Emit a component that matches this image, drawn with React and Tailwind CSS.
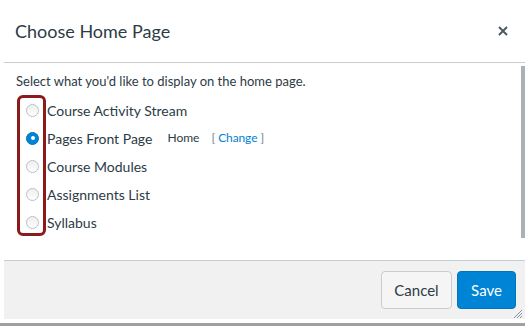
import React from "react";

const options = [
  { label: "Course Activity Stream" },
  { label: "Pages Front Page", checked: true },
  { label: "Course Modules" },
  { label: "Assignments List" },
  { label: "Syllabus" },
];

function Radio({ checked }) {
  if (checked) {
    return (
      <span className="w-[13px] h-[13px] rounded-full bg-[#0084d6] border border-[#0374b5] flex items-center justify-center shrink-0">
        <span className="w-[4px] h-[4px] rounded-full bg-white" />
      </span>
    );
  }
  return (
    <span className="w-[13px] h-[13px] rounded-full bg-gradient-to-b from-[#eeeeee] to-white border border-[#b9c0c5] shrink-0" />
  );
}

export default function App() {
  return (
    <div className="w-[525px] h-[326px] bg-white relative overflow-hidden font-['Lato',sans-serif] text-[#2d3b45]">
      <div className="pl-1">
        <div className="h-[63px] border-b border-[#c7cdd1] flex items-center justify-between pl-[11px] pr-[17px]">
          <h1 className="text-[18px] leading-none">Choose Home Page</h1>
          <svg width="10" height="10" viewBox="0 0 10 10" className="text-[#4d5a63]">
            <path d="M1 1L9 9M9 1L1 9" stroke="currentColor" strokeWidth="2" />
          </svg>
        </div>
      </div>

      <div className="h-[197px] flex">
        <div className="flex-1 pl-4 pt-[8px]">
          <p className="text-[13px] leading-[20px]">
            Select what you'd like to display on the home page.
          </p>
          <div className="mt-[5px]">
            {options.map((o) => (
              <div key={o.label} className="h-[28px] flex items-center pl-[10px] gap-2">
                <Radio checked={o.checked} />
                <span className="text-[14px]">{o.label}</span>
                {o.checked && (
                  <span className="flex items-center text-[12px] ml-[7px]">
                    <span>Home</span>
                    <span className="ml-[12px] text-[#73818c]">[</span>
                    <span className="ml-[3px] text-[#0081d3] tracking-[-0.1px]">Change</span>
                    <span className="ml-[3px] text-[#73818c]">]</span>
                  </span>
                )}
              </div>
            ))}
          </div>
        </div>
        <div className="w-[4px] h-[172px] mt-[3px] bg-[#a9b0b6]" />
      </div>

      <div className="pl-1">
        <div className="h-[59px] border-t border-[#c7cdd1] bg-[#f1f1f1] flex items-center justify-end gap-[5px] pr-[9px] relative">
          <button className="w-[71px] h-[38px] rounded-[4px] border border-[#c7cdd1] bg-[#f5f5f5] text-[15px] text-[#2d3b45]">
            Cancel
          </button>
          <button className="w-[59px] h-[38px] rounded-[4px] border border-[#0374b5] bg-[#0084d6] text-[15px] text-white">
            Save
          </button>
          <svg width="10" height="10" viewBox="0 0 10 10" className="absolute right-[3px] bottom-[1px]">
            <path d="M10 2L2 10M10 5L5 10M10 8L8 10" stroke="#8a949b" strokeWidth="1" />
          </svg>
        </div>
      </div>
      <div className="h-[4px]" />
      <div className="h-[3px] bg-[#a0a0a0]" />

      <div className="absolute left-[17px] top-[95px] w-[29px] h-[141px] border-[3px] border-[#8b1a1a] rounded-[6px]" />
    </div>
  );
}
